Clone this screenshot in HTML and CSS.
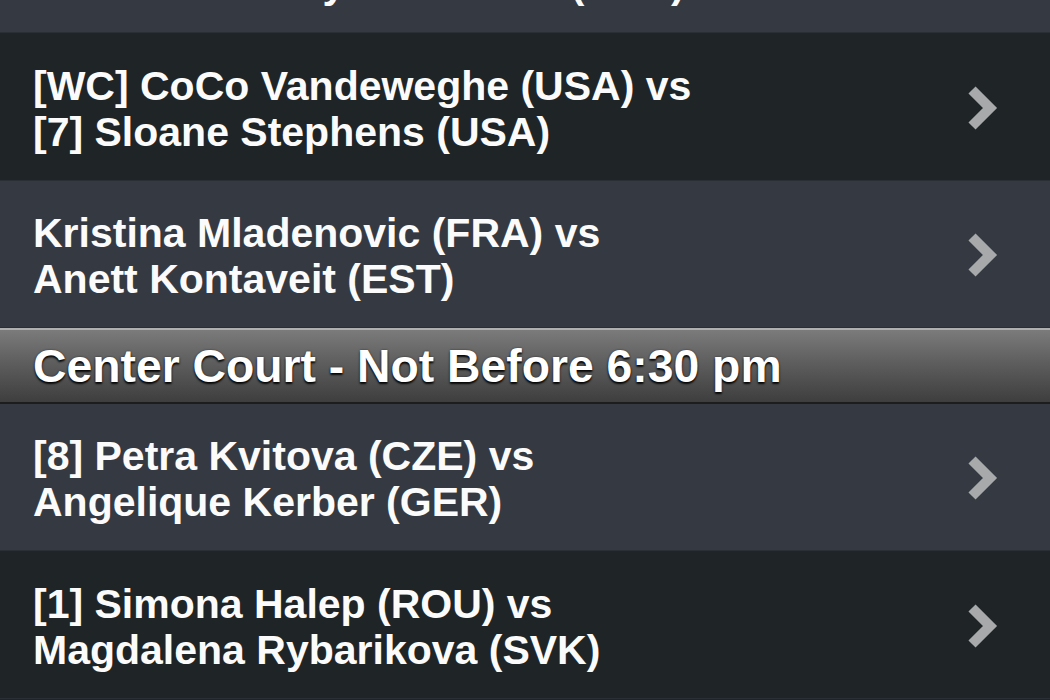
FILE: index.html
```html
<!DOCTYPE html>
<html>
<head>
<meta charset="utf-8">
<link rel="stylesheet" href="styles.css">
</head>
<body>
<div class="screen">
  <ul class="list">
    <li class="row light">
      <div class="match"><span>[3] Garbiñe Muguruza (ESP) vs</span><span>Anastasia Pavlyuchenkova (RUS)</span></div>
      <svg class="chev" viewBox="0 0 32 46" width="32" height="46"><polyline points="6,5 24,23 6,41" /></svg>
    </li>
    <li class="row dark">
      <div class="match"><span>[WC] CoCo Vandeweghe (USA) vs</span><span>[7] Sloane Stephens (USA)</span></div>
      <svg class="chev" viewBox="0 0 32 46" width="32" height="46"><polyline points="6,5 24,23 6,41" /></svg>
    </li>
    <li class="row light">
      <div class="match"><span>Kristina Mladenovic (FRA) vs</span><span>Anett Kontaveit (EST)</span></div>
      <svg class="chev" viewBox="0 0 32 46" width="32" height="46"><polyline points="6,5 24,23 6,41" /></svg>
    </li>
    <li class="section">Center Court - Not Before 6:30 pm</li>
    <li class="row light">
      <div class="match"><span>[8] Petra Kvitova (CZE) vs</span><span>Angelique Kerber (GER)</span></div>
      <svg class="chev" viewBox="0 0 32 46" width="32" height="46"><polyline points="6,5 24,23 6,41" /></svg>
    </li>
    <li class="row dark">
      <div class="match"><span>[1] Simona Halep (ROU) vs</span><span>Magdalena Rybarikova (SVK)</span></div>
      <svg class="chev" viewBox="0 0 32 46" width="32" height="46"><polyline points="6,5 24,23 6,41" /></svg>
    </li>
  </ul>
</div>
</body>
</html>
```
FILE: styles.css
```css
html, body {
  margin: 0;
  padding: 0;
  background: #1f2527;
}
.screen {
  width: 1050px;
  height: 700px;
  overflow: hidden;
}
.list {
  list-style: none;
  margin: -114.5px 0 0 0;
  padding: 0;
  font-family: "Liberation Sans", Arial, Helvetica, sans-serif;
  font-weight: bold;
  color: #fbfbfb;
}
.row {
  box-sizing: border-box;
  height: 147.5px;
  display: flex;
  align-items: center;
  justify-content: space-between;
  padding: 0 52.5px 0 33px;
  border-bottom: 1px solid #2a2f35;
}
.row.light {
  background: #353a42;
}
.row.dark {
  background: #1f2527;
}
.match {
  display: flex;
  flex-direction: column;
  font-size: 41px;
  line-height: 46px;
  padding-top: 5px;
}
.chev {
  display: block;
  flex: none;
  margin-top: 3px;
}
.chev polyline {
  fill: none;
  stroke: #a7a9aa;
  stroke-width: 10;
  stroke-linejoin: miter;
  stroke-linecap: butt;
}
.section {
  box-sizing: border-box;
  height: 75.5px;
  display: flex;
  align-items: center;
  padding: 0 33px;
  font-size: 46.3px;
  color: #ffffff;
  border-top: 2px solid #b0b0b0;
  border-bottom: 2px solid #1d1d1d;
  background: linear-gradient(to bottom, #7b7b7b 0%, #5e5e5e 45%, #3e3e3e 100%);
  text-shadow: 0 2px 2px rgba(0, 0, 0, 0.9), 0 0 2px rgba(0, 0, 0, 0.6);
}
```
